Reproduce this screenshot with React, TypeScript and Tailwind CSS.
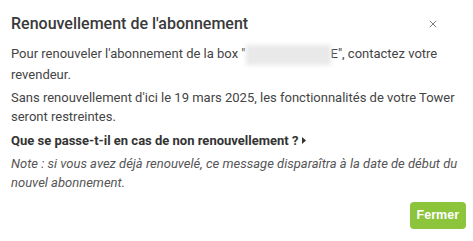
import { X } from 'lucide-react'

export default function App() {
  return (
    <div className="w-[473px] h-[241px] bg-white text-[#444] font-['Roboto',sans-serif] overflow-hidden">
      <div className="flex items-center justify-between pl-[11px] pr-[34px] pt-[7px] h-[40px]">
        <h2 className="text-[16px] font-medium text-[#3a3a3a]">Renouvellement de l'abonnement</h2>
        <X className="h-[12px] w-[12px] text-[#555]" strokeWidth={1.5} />
      </div>
      <div className="px-[11px] pt-[4px] text-[13px] leading-[19px]">
        <p>
          Pour renouveler l'abonnement de la box "
          <span className="inline-block align-middle w-[85px] h-[20px] bg-[#e9e9e9] blur-[2px]" />
          E", contactez votre revendeur.
        </p>
        <p className="mt-[4px]">
          Sans renouvellement d'ici le 19 mars 2025, les fonctionnalités de votre Tower seront restreintes.
        </p>
        <p className="mt-[5px] font-bold text-[#333] flex items-center gap-[4px]">
          Que se passe-t-il en cas de non renouvellement ?
          <svg width="4" height="7" viewBox="0 0 4 7"><path d="M0 0L4 3.5L0 7Z" fill="#333" /></svg>
        </p>
        <p className="mt-[4px] italic text-[#555]">
          Note : si vous avez déjà renouvelé, ce message disparaîtra à la date de début du nouvel abonnement.
        </p>
      </div>
      <div className="flex justify-end pr-[7px] pt-[10px]">
        <button className="h-[27px] px-[7px] rounded-[4px] bg-[#8cc43c] text-white text-[12.5px] font-bold font-['Liberation_Sans',sans-serif]">
          Fermer
        </button>
      </div>
    </div>
  )
}
